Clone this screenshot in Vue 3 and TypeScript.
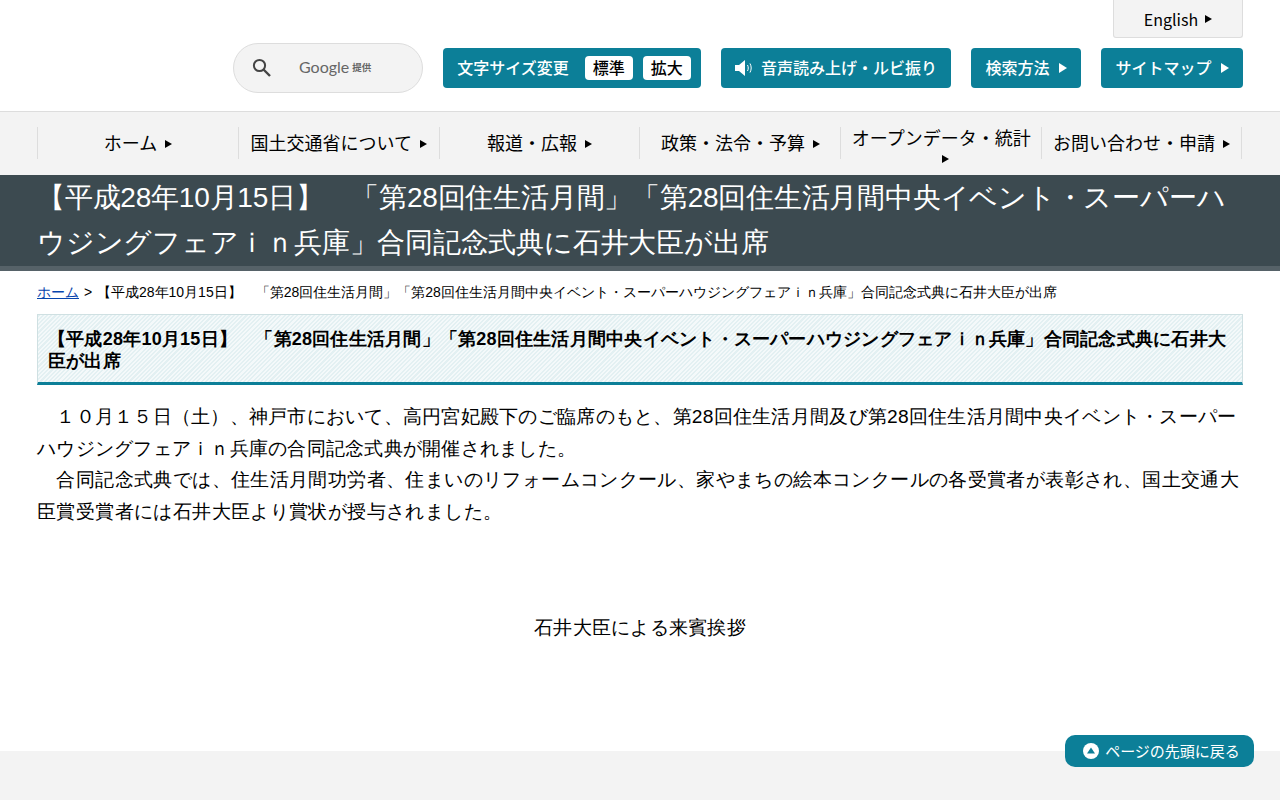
<script setup lang="ts">
const nav: { label: string; wrap?: boolean }[] = [
  { label: 'ホーム' },
  { label: '国土交通省について' },
  { label: '報道・広報' },
  { label: '政策・法令・予算' },
  { label: 'オープンデータ・統計', wrap: true },
  { label: 'お問い合わせ・申請' },
]
const title = '【平成28年10月15日】　「第28回住生活月間」「第28回住生活月間中央イベント・スーパーハウジングフェアｉｎ兵庫」合同記念式典に石井大臣が出席'
</script>

<template>
  <div class="page">
    <header class="header">
      <div class="lang-row">
        <a class="lang">English<span class="tri dark"></span></a>
      </div>
      <div class="tools">
        <div class="search">
          <svg class="glass" width="20" height="20" viewBox="0 0 20 20" fill="none" stroke="#444" stroke-width="2">
            <circle cx="7.500" cy="7.500" r="5.600" />
            <path d="M11.500 11.500l6.500 6.500" stroke-width="2.400" />
          </svg>
          <span class="google">Google</span>
          <span class="teikyo">提供</span>
        </div>
        <div class="btn size">
          <span class="lift">文字サイズ変更</span>
          <span class="chip first"><span class="lift">標準</span></span>
          <span class="chip"><span class="lift">拡大</span></span>
        </div>
        <div class="btn voice">
          <svg width="18" height="16" viewBox="0 0 18 16" fill="#fff">
            <path d="M0 5h4l6-5v16l-6-5H0z" />
            <path d="M12.500 5c1 2 1 4 0 6M15 3.500c1.600 3 1.600 6 0 9" fill="none" stroke="#fff" stroke-width="1" />
          </svg>
          <span class="lift">音声読み上げ・ルビ振り</span>
        </div>
        <div class="btn method"><span class="lift">検索方法</span><span class="tri light"></span></div>
        <div class="btn map"><span class="lift">サイトマップ</span><span class="tri light"></span></div>
      </div>
    </header>

    <nav class="nav">
      <a v-for="n in nav" :key="n.label" class="nav-item" :class="{ wrap: n.wrap }">
        <span>{{ n.label }}<span class="tri dark nav-tri"></span></span>
      </a>
    </nav>

    <div class="banner">
      <h1>{{ title }}</h1>
    </div>

    <main class="content">
      <p class="crumb"><a href="#">ホーム</a> &gt; {{ title }}</p>
      <h2 class="heading">{{ title }}</h2>
      <div class="body">
        <p class="para-a">　１０月１５日（土）、神戸市において、高円宮妃殿下のご臨席のもと、第28回住生活月間及び第28回住生活月間中央イベント・スーパーハウジングフェアｉｎ兵庫の合同記念式典が開催されました。</p>
        <p class="para-b">　合同記念式典では、住生活月間功労者、住まいのリフォームコンクール、家やまちの絵本コンクールの各受賞者が表彰され、国土交通大臣賞受賞者には石井大臣より賞状が授与されました。</p>
      </div>
      <p class="caption">石井大臣による来賓挨拶</p>
    </main>

    <footer class="footer"></footer>

    <a class="to-top">
      <svg width="16" height="16" viewBox="0 0 16 16">
        <circle cx="8" cy="8" r="8" fill="#fff" />
        <path d="M8 4.500l4 6H4z" fill="#0c7f98" />
      </svg>
      <span>ページの先頭に戻る</span>
    </a>
  </div>
</template>

<style>
html, body { margin: 0; background: #fff; }
</style>

<style scoped>
.page {
  position: relative;
  height: 800px;
  overflow: hidden;
  font-family: "Liberation Sans", sans-serif;
  color: #000;
  display: flex;
  flex-direction: column;
}
.header {
  height: 111px;
  box-sizing: border-box;
  padding: 0 37px;
  flex: none;
}
.lang-row { display: flex; justify-content: flex-end; height: 48px; }
.lang {
  width: 130px;
  height: 38px;
  box-sizing: border-box;
  background: #f3f3f3;
  border: 1px solid #ddd;
  border-top: 0;
  border-radius: 0 0 3px 3px;
  display: flex;
  align-items: center;
  justify-content: center;
  font: 16px/1 "Noto Sans CJK JP", "Noto Sans", sans-serif;
}
.tools { display: flex; justify-content: flex-end; align-items: center; height: 40px; }
.search {
  width: 190px;
  height: 50px;
  box-sizing: border-box;
  border: 1px solid #ddd;
  border-radius: 25px;
  background: #f3f3f3;
  margin-right: 20px;
  display: flex;
  align-items: center;
  padding-left: 18px;
}
.google { margin: 0 0 3px 27px; font: 16px/1 Lato, sans-serif; color: #666; }
.teikyo { margin-left: 3px; font: bold 9.500px/1 "Noto Sans CJK JP", sans-serif; color: #666; }
.btn {
  height: 40px;
  box-sizing: border-box;
  background: #0c7f98;
  border-radius: 4px;
  color: #fff;
  font: 500 16px/1 "Noto Sans CJK JP", sans-serif;
  display: flex;
  align-items: center;
  justify-content: center;
  flex: none;
}
.lift { padding-bottom: 2px; }
.size { width: 258px; margin-right: 20px; padding-left: 4px; }
.voice { width: 230px; margin-right: 20px; gap: 8px; }
.method { width: 110px; margin-right: 20px; }
.map { width: 142px; }
.chip {
  width: 48px;
  height: 24px;
  background: #fff;
  color: #000;
  border-radius: 4px;
  display: flex;
  align-items: center;
  justify-content: center;
  margin-left: 10px;
  font: 500 16px/1 "Noto Sans CJK JP", sans-serif;
}
.chip.first { margin-left: 16px; }
.tri {
  display: inline-block;
  width: 0;
  height: 0;
  border-style: solid;
  border-width: 4px 0 4px 7px;
  border-color: transparent transparent transparent #000;
  margin-left: 7px;
}
.tri.light { border-width: 5px 0 5px 8px; border-left-color: #fff; margin-left: 9px; }
.nav {
  flex: none;
  height: 64px;
  box-sizing: border-box;
  border-top: 1px solid #ddd;
  background: #f3f3f3;
  padding: 15px 38px 16px 37px;
  display: grid;
  grid-template-columns: repeat(6, 1fr);
  grid-template-rows: 32px;
}
.nav-item {
  border-left: 1px solid #ddd;
  display: flex;
  align-items: center;
  justify-content: center;
  text-align: center;
  font: 18px/24px "Noto Sans CJK JP", sans-serif;
  padding: 0 10px 2px;
  min-width: 0;
}
.nav-item:last-child { border-right: 1px solid #ddd; }
.nav-item.wrap {
  align-items: flex-start;
  line-height: 20px;
  padding: 0 9px;
}
.nav-tri { margin-left: 8px; vertical-align: 2px; }
.banner {
  flex: none;
  height: 96px;
  box-sizing: border-box;
  background: #3c4a50;
  border-bottom: 5px solid #566268;
  padding: 0 37px;
}
.banner h1 {
  margin: 0;
  font-size: 28px;
  font-weight: 400;
  line-height: 45px;
  letter-spacing: -0.220px;
  color: #fff;
}
.content { flex: 1; padding: 0 37px; }
.crumb {
  margin: 11px 0 0;
  font-size: 14px;
  line-height: 20px;
  word-spacing: 1px;
}
.crumb a { color: #0645ad; }
.heading {
  margin: 12px 0 0;
  height: 71px;
  box-sizing: border-box;
  padding: 13px 10px 0;
  font-size: 18px;
  line-height: 22px;
  letter-spacing: 0.230px;
  font-weight: 700;
  border: 1px solid #cfe0e2;
  border-bottom: 3px solid #0c7f98;
  background: repeating-linear-gradient(135deg, #e3f0f2 0, #e3f0f2 1.500px, #f4f9fa 1.500px, #f4f9fa 3px);
}
.body {
  margin: 16px 0 0;
  font-size: 19.200px;
  line-height: 31.680px;
}
.body p { margin: 0; }
.para-a { letter-spacing: 0.260px; }
.para-b { letter-spacing: 0.390px; }
.caption {
  margin: 84px 0 0;
  text-align: center;
  font-size: 19.200px;
  letter-spacing: 0.270px;
  line-height: 32px;
}
.footer { flex: none; height: 49px; background: #f3f3f3; }
.to-top {
  position: absolute;
  left: 1065px;
  top: 735px;
  width: 189px;
  height: 32px;
  box-sizing: border-box;
  background: #0c7f98;
  border-radius: 10px;
  color: #fff;
  display: flex;
  align-items: center;
  justify-content: center;
  gap: 6px;
  font: 15px/1 "Noto Sans CJK JP", sans-serif;
  padding-left: 4px;
}
.to-top span { padding-bottom: 2px; }
</style>
